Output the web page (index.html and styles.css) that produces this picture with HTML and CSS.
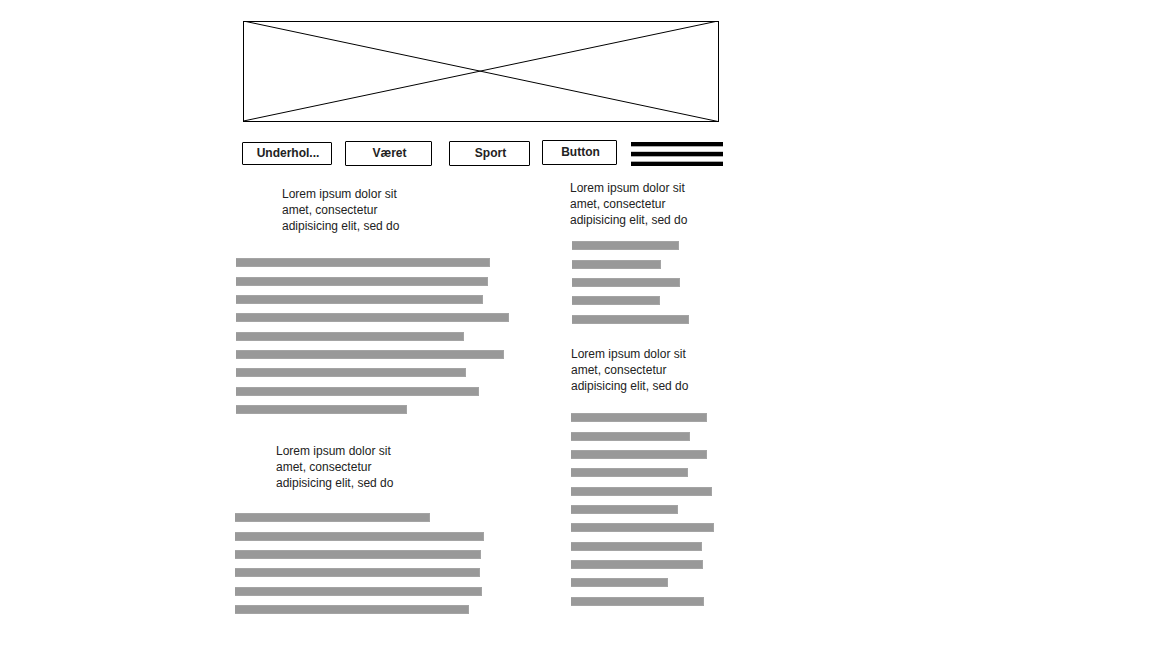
FILE: index.html
```html
<!DOCTYPE html>
<html lang="no">
<head>
<meta charset="utf-8">
<meta name="viewport" content="width=device-width, initial-scale=1">
<title>Wireframe</title>
<link rel="stylesheet" href="styles.css">
</head>
<body>
<div class="page">
  <header class="header">
    <svg class="banner" viewBox="0 0 476 101" role="img" aria-label="Banner">
      <path d="M.5 .5H475.5V100.5H.5Z" shape-rendering="crispEdges"/>
      <path d="M.5 0L475 100.5M.5 100L475 0"/>
    </svg>
    <nav class="nav">
      <button class="tab tab-short" type="button">Underhol...</button>
      <button class="tab tab-weather" type="button">Været</button>
      <button class="tab tab-sport" type="button">Sport</button>
      <button class="tab tab-raised" type="button">Button</button>
      <button class="menu" type="button" aria-label="Menu"><span class="stripe"></span><span class="stripe"></span><span class="stripe"></span></button>
    </nav>
  </header>
  <main class="columns">
    <div class="main-column">
      <article class="story story-lead">
        <p class="intro">Lorem ipsum dolor sit<br>amet, consectetur<br>adipisicing elit, sed do</p>
        <div class="lines">
          <span class="line" style="width:254px"></span>
          <span class="line" style="width:252px"></span>
          <span class="line" style="width:247px"></span>
          <span class="line" style="width:273px"></span>
          <span class="line" style="width:228px"></span>
          <span class="line" style="width:268px"></span>
          <span class="line" style="width:230px"></span>
          <span class="line" style="width:243px"></span>
          <span class="line" style="width:171px"></span>
        </div>
      </article>
      <article class="story story-second">
        <p class="intro">Lorem ipsum dolor sit<br>amet, consectetur<br>adipisicing elit, sed do</p>
        <div class="lines">
          <span class="line" style="width:195px"></span>
          <span class="line" style="width:249px"></span>
          <span class="line" style="width:246px"></span>
          <span class="line" style="width:245px"></span>
          <span class="line" style="width:247px"></span>
          <span class="line" style="width:234px"></span>
        </div>
      </article>
    </div>
    <aside class="side-column">
      <article class="story side-first">
        <p class="intro">Lorem ipsum dolor sit<br>amet, consectetur<br>adipisicing elit, sed do</p>
        <div class="lines">
          <span class="line" style="width:107px"></span>
          <span class="line" style="width:89px"></span>
          <span class="line" style="width:108px"></span>
          <span class="line" style="width:88px"></span>
          <span class="line" style="width:117px"></span>
        </div>
      </article>
      <article class="story side-second">
        <p class="intro">Lorem ipsum dolor sit<br>amet, consectetur<br>adipisicing elit, sed do</p>
        <div class="lines">
          <span class="line" style="width:136px"></span>
          <span class="line" style="width:119px"></span>
          <span class="line" style="width:136px"></span>
          <span class="line" style="width:117px"></span>
          <span class="line" style="width:141px"></span>
          <span class="line" style="width:107px"></span>
          <span class="line" style="width:143px"></span>
          <span class="line" style="width:131px"></span>
          <span class="line" style="width:132px"></span>
          <span class="line" style="width:97px"></span>
          <span class="line" style="width:133px"></span>
        </div>
      </article>
    </aside>
  </main>
</div>
</body>
</html>
```
FILE: styles.css
```css
* {
  box-sizing: border-box;
}

body {
  margin: 0;
  background: #fff;
  color: #222;
  font: 12px/16px "Liberation Sans", Arial, sans-serif;
}

.page {
  max-width: 723px;
  padding: 21px 0 32px 235px;
}

.banner {
  display: block;
  width: calc(100% - 12px);
  margin-left: 8px;
  fill: none;
  stroke: #000;
  stroke-width: 1;
}

.nav {
  display: flex;
  align-items: flex-end;
  margin: 18px 0 0 7px;
}

.tab {
  height: 25px;
  padding: 0 0 2px 2px;
  border: 1px solid #000;
  border-radius: 1px;
  background: #fff;
  color: #222;
  font: bold 12px/16px "Liberation Sans", Arial, sans-serif;
}

.tab-short {
  width: 90px;
  height: 23px;
  margin: 0 13px 1px 0;
}

.tab-weather {
  width: 87px;
  margin-right: 17px;
}

.tab-sport {
  width: 81px;
  margin-right: 12px;
}

.tab-raised {
  width: 75px;
  margin: 0 14px 1px 0;
}

.menu {
  display: flex;
  flex: 1;
  flex-direction: column;
  justify-content: space-between;
  height: 24px;
  padding: 0;
  border: 0;
  background: #fff;
}

.stripe {
  width: 100%;
  height: 4px;
  background: #000;
  box-shadow: 0 1px #aaa;
}

.stripe:nth-child(2) {
  box-shadow: 0 1px #aaa, 0 -1px #ccc;
}

.stripe:last-child {
  box-shadow: 0 -1px #aaa;
}

.columns {
  display: grid;
  grid-template-columns: 1fr 154px;
  padding-top: 14px;
}

.main-column {
  padding-top: 6px;
}

.intro {
  margin: 0;
}

.lines {
  display: flex;
  flex-direction: column;
  gap: 9px;
}

.line {
  height: 9px;
  border: solid #a4a4a4;
  border-width: 1px 1px 1px 0;
  background: #999;
}

.line:nth-child(3n + 1):not(:last-child) {
  margin-bottom: 1px;
}

.story-lead .intro {
  padding: 0 0 24px 47px;
}

.story-lead .lines {
  padding-left: 1px;
}

.story-second {
  padding-top: 29px;
}

.story-second .intro {
  padding: 0 0 22px 41px;
}

.side-first .intro {
  padding: 0 0 13px 1px;
}

.side-first .lines {
  padding-left: 3px;
}

.side-second {
  padding: 22px 0 0 1px;
}

.side-second .intro {
  padding: 0 0 19px 1px;
}

.side-second .lines {
  padding-left: 1px;
}
```
